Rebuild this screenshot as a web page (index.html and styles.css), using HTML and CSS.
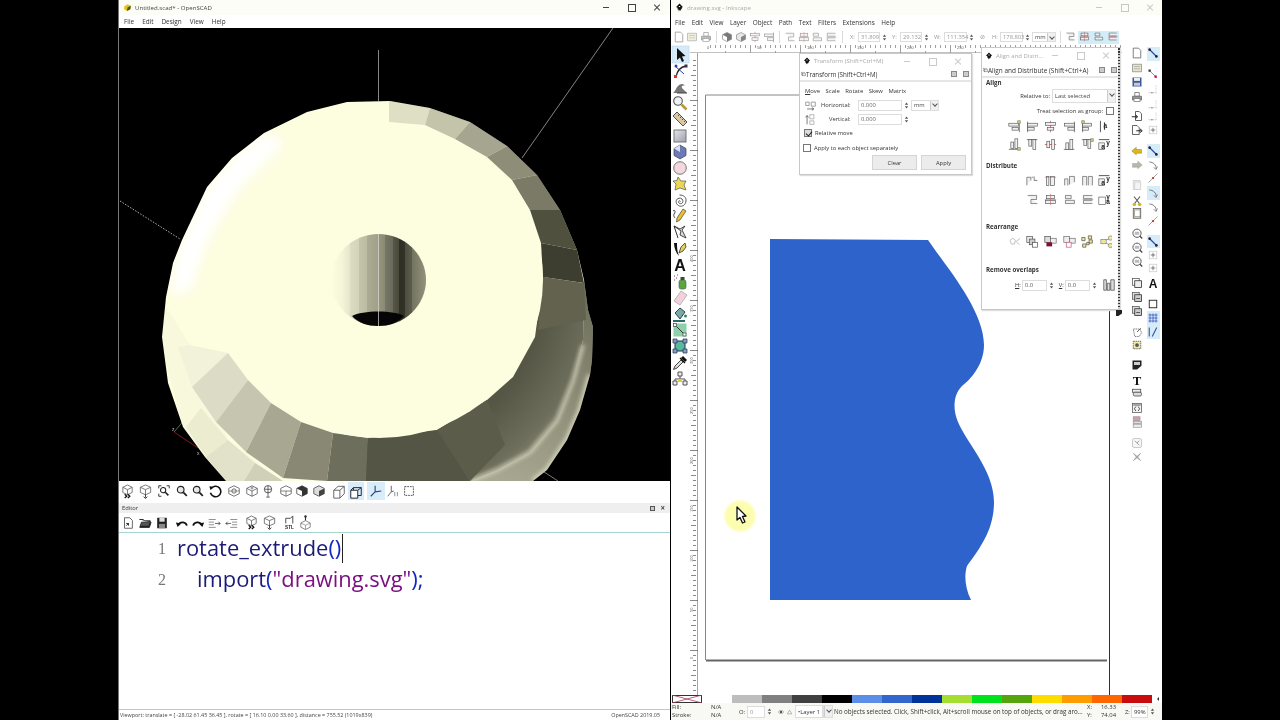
FILE: index.html
```html
<!DOCTYPE html>
<html lang="en">
<head>
<meta charset="utf-8">
<title>OpenSCAD and Inkscape</title>
<link rel="stylesheet" href="styles.css">
</head>
<body>
<svg class="defs" width="0" height="0" aria-hidden="true">
  <defs>
    <radialGradient id="gBand" gradientUnits="userSpaceOnUse" cx="379" cy="280" r="240">
      <stop offset=".7" stop-color="#565646"/><stop offset=".9" stop-color="#6e6e5c"/><stop offset="1" stop-color="#8a8a74"/>
    </radialGradient>
    <linearGradient id="gRing" gradientUnits="userSpaceOnUse" x1="590" y1="300" x2="500" y2="480">
      <stop offset="0" stop-color="#6e6e5c"/><stop offset=".5" stop-color="#8e8e78"/><stop offset="1" stop-color="#a8a892"/>
    </linearGradient>
    <linearGradient id="gHole" gradientUnits="userSpaceOnUse" x1="331" y1="0" x2="426" y2="0">
      <stop offset="0" stop-color="#fdfde0"/><stop offset=".12" stop-color="#f4f4d8"/><stop offset=".2" stop-color="#e6e6cc"/>
      <stop offset=".2" stop-color="#dcdcc2"/><stop offset=".29" stop-color="#d4d4ba"/><stop offset=".29" stop-color="#c4c4aa"/>
      <stop offset=".38" stop-color="#bcbca2"/><stop offset=".38" stop-color="#acac94"/><stop offset=".5" stop-color="#a0a088"/>
      <stop offset=".5" stop-color="#96967e"/><stop offset=".57" stop-color="#8a8a72"/><stop offset=".57" stop-color="#76766a"/>
      <stop offset=".65" stop-color="#6a6a58"/><stop offset=".65" stop-color="#55554a"/><stop offset=".72" stop-color="#4a4a3a"/>
      <stop offset=".72" stop-color="#2e2e26"/><stop offset=".78" stop-color="#333328"/><stop offset=".78" stop-color="#4e4e40"/>
      <stop offset=".85" stop-color="#5c5c4c"/><stop offset=".85" stop-color="#72725f"/><stop offset="1" stop-color="#92927c"/>
    </linearGradient>
    <linearGradient id="gPanel" x1="0" y1="0" x2="1" y2="1"><stop offset="0" stop-color="#e6e6ea"/><stop offset="1" stop-color="#9aa0b0"/></linearGradient>
    <pattern id="tickH" width="50" height="8" patternUnits="userSpaceOnUse">
      <path d="M.5 0V8M5.500 5V8M10.500 5V8M15.500 5V8M20.500 5V8M25.500 3V8M30.500 5V8M35.500 5V8M40.500 5V8M45.500 5V8" stroke="#777" stroke-width=".7" fill="none"/>
    </pattern>
    <pattern id="tickV" width="8" height="50" patternUnits="userSpaceOnUse">
      <path d="M0 .5H8M5 5.500H8M5 10.500H8M5 15.500H8M5 20.500H8M3 25.500H8M5 30.500H8M5 35.500H8M5 40.500H8M5 45.500H8" stroke="#555" stroke-width=".7" fill="none"/>
    </pattern>
    <clipPath id="silh"><polygon points="347,102 390,101 430,108 470,122 507,146 537,175 560,210 577,250 584,280 588,310 593,327 592,360 590,375 580,410 567,440 547,470 533,481 226,481 205,457 183,427 168,383 162,337 166,297 173,263 182,240 207,187 232,158 264,133 307,112"/></clipPath>

    <symbol id="oprev" viewBox="0 0 16 16"><path d="M8 1 13 3.500V9L8 11.500 3 9V3.500ZM3 3.500 8 6 13 3.500M8 6V11.500" fill="none" stroke="#666" stroke-width=".9"/><path d="M5 11l2.200 2-2.200 2M8.300 11l2.200 2-2.200 2" fill="none" stroke="#111" stroke-width="1.300"/></symbol>
    <symbol id="orend" viewBox="0 0 16 16"><path d="M8 1 13.500 3.500V9L8 11.500 2.500 9V3.500ZM2.500 3.500 8 6 13.500 3.500M8 6V11.500" fill="none" stroke="#666" stroke-width=".9"/><path d="M8 11v3.500M6 13.500l2 2 2-2" fill="none" stroke="#333" stroke-width="1"/></symbol>
    <symbol id="zall" viewBox="0 0 16 16"><circle cx="7" cy="7" r="3" fill="#fff" stroke="#222" stroke-width="1.200"/><path d="M9.500 9.500 13 13" stroke="#222" stroke-width="1.800"/><path d="M2 5V2H5M11 2H14V5M2 11V14H5" fill="none" stroke="#222" stroke-width="1"/></symbol>
    <symbol id="zoom" viewBox="0 0 16 16"><circle cx="6.500" cy="6.500" r="3.800" fill="#e8e8e8" stroke="#222" stroke-width="1.300"/><path d="M9.500 9.500 13.500 13.500" stroke="#222" stroke-width="2"/></symbol>
    <symbol id="reset" viewBox="0 0 16 16"><path d="M3.500 5.500A6 6 0 1 1 2.800 10" fill="none" stroke="#111" stroke-width="1.800"/><path d="M1.500 2.500 5.500 3 3 7Z" fill="#111"/></symbol>
    <symbol id="v1" viewBox="0 0 16 16"><path d="M8 2 14 5V11L8 14 2 11V5Z" fill="#fff" stroke="#555" stroke-width=".9"/><circle cx="8" cy="8" r="2.500" fill="#fff" stroke="#333" stroke-width=".8"/><path d="M2 8H14" stroke="#555" stroke-width=".7"/></symbol>
    <symbol id="v2" viewBox="0 0 16 16"><path d="M8 2 14 5V11L8 14 2 11V5ZM2 5 8 8 14 5M8 8V14" fill="#fff" stroke="#555" stroke-width=".9"/><circle cx="8" cy="4.500" r="1.300" fill="#ccc" stroke="#444" stroke-width=".5"/></symbol>
    <symbol id="v3" viewBox="0 0 16 16"><circle cx="8" cy="6" r="4.200" fill="#fff" stroke="#444"/><path d="M4 6H12M8 2V10M8 10V15M6 15H10" stroke="#444" stroke-width=".9"/></symbol>
    <symbol id="v4" viewBox="0 0 16 16"><path d="M8 2 14 5V11L8 14 2 11V5Z" fill="#fff" stroke="#555" stroke-width=".9"/><path d="M2 8H14M8 8V14" stroke="#555" stroke-width=".8"/></symbol>
    <symbol id="v5" viewBox="0 0 16 16"><path d="M8 2 14 5V11L8 14 2 11V5Z" fill="#fff" stroke="#444" stroke-width=".9"/><path d="M8 8 14 5V11L8 14Z M2 5 8 2 14 5 8 8Z" fill="#333"/></symbol>
    <symbol id="v6" viewBox="0 0 16 16"><path d="M8 2 14 5V11L8 14 2 11V5Z" fill="#ddd" stroke="#444" stroke-width=".9"/><path d="M8 8 14 5V11L8 14Z" fill="#444"/></symbol>
    <symbol id="persp" viewBox="0 0 16 16"><path d="M2 6H9V15H2ZM2 6 7 1.500H14V10L9 15M9 6 14 1.500" fill="#fff" stroke="#444" stroke-width=".9"/></symbol>
    <symbol id="ortho" viewBox="0 0 16 16"><path d="M2 6H10V15H2Z" fill="#fff" stroke="#223" stroke-width="1.100"/><path d="M5 3H14V12H10M5 3V6M2 6 5 3M10 6 14 3" fill="none" stroke="#223" stroke-width="1.100"/></symbol>
    <symbol id="axes" viewBox="0 0 16 16"><path d="M7 2V9M7 9 2 14M7 9 14 8" fill="none" stroke="#2a4a7a" stroke-width="1.300"/></symbol>
    <symbol id="scale" viewBox="0 0 16 16"><path d="M6 2V9M6 9 2 14M6 9 9 8" fill="none" stroke="#555" stroke-width="1"/><path d="M10 9V14M13 9V14" stroke="#999" stroke-width="1.200"/></symbol>
    <symbol id="edges" viewBox="0 0 16 16"><rect x="3" y="3" width="10" height="10" fill="none" stroke="#444" stroke-dasharray="2 1" stroke-width="1"/></symbol>
    <symbol id="enew" viewBox="0 0 16 16"><path d="M4 2H10L13 5V14H4Z" fill="#fff" stroke="#555"/><path d="M8.500 8.500 6 11M6 8.500H8.500V11" stroke="#111" fill="none"/></symbol>
    <symbol id="eopen" viewBox="0 0 16 16"><path d="M1.500 4H6L7.500 5.500H14V7H4L2 13H13L15 7" fill="#222" stroke="#222"/><path d="M3 11 4.500 7.500H13L12 11Z" fill="#555"/></symbol>
    <symbol id="esave" viewBox="0 0 16 16"><path d="M2.500 2H13.500V14H2.500Z" fill="#222"/><rect x="5" y="2" width="6" height="4.500" fill="#ddd"/><rect x="4.500" y="9" width="7" height="5" fill="#888"/></symbol>
    <symbol id="undo" viewBox="0 0 16 16"><path d="M4 10A5 4.500 0 0 1 13.500 11" fill="none" stroke="#111" stroke-width="2"/><path d="M1 7.500 7 8.500 3 12.500Z" fill="#111"/></symbol>
    <symbol id="redo" viewBox="0 0 16 16"><path d="M12 10A5 4.500 0 0 0 2.500 11" fill="none" stroke="#111" stroke-width="2"/><path d="M15 7.500 9 8.500 13 12.500Z" fill="#111"/></symbol>
    <symbol id="indent" viewBox="0 0 16 16"><path d="M2 4H10M2 7H8M2 10H8M2 13H10" stroke="#777" stroke-width=".9"/><path d="M9 8.500H15M13 6.500l2 2-2 2" fill="none" stroke="#444" stroke-width=".9"/></symbol>
    <symbol id="unindent" viewBox="0 0 16 16"><path d="M6 4H14M8 7H14M8 10H14M6 13H14" stroke="#777" stroke-width=".9"/><path d="M1 8.500H7M3 6.500l-2 2 2 2" fill="none" stroke="#444" stroke-width=".9"/></symbol>
    <symbol id="stl" viewBox="0 0 16 16"><path d="M4 9V3.500H9L11.500 1V9" fill="none" stroke="#333" stroke-width=".9"/><text x="8" y="15" text-anchor="middle" class="icontxt">STL</text></symbol>
    <symbol id="exp" viewBox="0 0 16 16"><path d="M8 1V6" stroke="#333" stroke-width="1.200"/><circle cx="8" cy="1.500" r="1.300" fill="#333"/><path d="M8 6 13 8.500V13L8 15.500 3 13V8.500Z" fill="none" stroke="#777" stroke-width=".9"/><path d="M3 8.500 8 11 13 8.500M8 11V15.500" fill="none" stroke="#777" stroke-width=".7"/></symbol>
    <symbol id="osicon" viewBox="0 0 16 16"><path d="M2 6 8 2 14 5 13 11 7 14 2 11Z" fill="#e8c020"/><path d="M8 8 14 5 13 11 7 14Z" fill="#3a5a20"/></symbol>
    <symbol id="ink" viewBox="0 0 16 16"><path d="M8 1 14 7 11.500 9 12.500 10.500 10.500 11 10 14 8.500 12 7 15 6 11 4 11.500 5 9 2 7Z" fill="#111"/><path d="M6 5.500H10L8 7.500Z" fill="#fff"/></symbol>
    <symbol id="eye" viewBox="0 0 16 16"><path d="M1 8C4 3 12 3 15 8 12 13 4 13 1 8Z" fill="#fff" stroke="#555" stroke-width="1.400"/><circle cx="8" cy="8" r="2.800" fill="#333"/></symbol>
    <symbol id="lock" viewBox="0 0 16 16"><path d="M8 3 14 13H2Z" fill="none" stroke="#777" stroke-width="1.300"/></symbol>
    <symbol id="hmove" viewBox="0 0 16 16"><path d="M1 3H6V8H1ZM9 3H15V9H9Z" fill="#fff" stroke="#666"/><path d="M3 13H12M10 11 13 13 10 15" fill="none" stroke="#222"/></symbol>
    <symbol id="vmove" viewBox="0 0 16 16"><path d="M7 1H13V7H7ZM7 10H13V15H7Z" fill="#fff" stroke="#888"/><path d="M3 15V3M1 5 3 2 5 5" fill="none" stroke="#222"/></symbol>

    <symbol id="tarrow" viewBox="0 0 16 16"><path d="M5 1V13L8 10.500 10 15 12 14 10 9.500 13.500 9Z" fill="#111"/></symbol>
    <symbol id="tnode" viewBox="0 0 16 16"><path d="M4 14C5 8 8 4 14 3" fill="none" stroke="#222" stroke-width="1.300"/><path d="M3 3 12 11" stroke="#2040b0" stroke-width="1"/><rect x="2" y="12" width="3" height="3" fill="#d33"/><rect x="12.500" y="1.500" width="3" height="3" fill="#334"/><circle cx="4" cy="3" r="1.500" fill="#2040b0"/></symbol>
    <symbol id="ttweak" viewBox="0 0 16 16"><path d="M1 14C3 13 4 9 6 7S11 4 13 7C11 6 9 7 10 9L13 12 15 14Z" fill="#777"/><path d="M5 14H15" stroke="#444"/></symbol>
    <symbol id="tzoom" viewBox="0 0 16 16"><circle cx="6" cy="6" r="4.300" fill="#eef2f5" stroke="#555" stroke-width="1.100"/><path d="M9.500 9.500 14.500 14.500" stroke="#b89838" stroke-width="2.600"/></symbol>
    <symbol id="tmeasure" viewBox="0 0 16 16"><path d="M5 1 15 11 11 15 1 5Z" fill="#d8c8a8" stroke="#444" stroke-width=".9"/><path d="M6 5 7.500 3.500M8 7 9.500 5.500M10 9 11.500 7.500M12 11 13.500 9.500" stroke="#333" stroke-width=".8"/></symbol>
    <symbol id="trect" viewBox="0 0 16 16"><rect x="2" y="2" width="12" height="12" fill="url(#gPanel)" stroke="#777"/></symbol>
    <symbol id="tbox" viewBox="0 0 16 16"><path d="M8 1 14 4.500V11.500L8 15 2 11.500V4.500Z" fill="#6a7ab8" stroke="#444" stroke-width=".7"/><path d="M8 8 2 4.500 8 1V8Z" fill="#dde"/></symbol>
    <symbol id="tellipse" viewBox="0 0 16 16"><circle cx="8" cy="8" r="6.300" fill="#f4d8e0" stroke="#777"/></symbol>
    <symbol id="tstar" viewBox="0 0 16 16"><path d="M6 1 9 5 14 5 12 9 14 14 8 12 3 14 4 8 1 5 5 4.500Z" fill="#ecd850" stroke="#666" stroke-width=".8"/></symbol>
    <symbol id="tspiral" viewBox="0 0 16 16"><path d="M8.500 8.500C8 7 6.500 8 6.500 9S8 11 9.500 10.500 11.500 7.500 10 6 5.500 5 4.500 7 4.500 12 7.500 13 13.500 12 14 8 11.500 2 7.500 2" fill="none" stroke="#555" stroke-width="1"/></symbol>
    <symbol id="tpencil" viewBox="0 0 16 16"><path d="M14 3 11 1 5 10 4.500 14 8 12Z" fill="#e8c030" stroke="#444" stroke-width=".7"/><path d="M1 3C3 1 4 4 2 6 1 8 3 10 3 10" fill="none" stroke="#333" stroke-width=".9"/></symbol>
    <symbol id="tpen" viewBox="0 0 16 16"><path d="M2 2 9 7 8 11 14 14 10 6 13 2 8 5Z" fill="#ddd" stroke="#333" stroke-width=".9"/><path d="M2 2 6 14" stroke="#333" stroke-width="1"/></symbol>
    <symbol id="tcalli" viewBox="0 0 16 16"><path d="M2 2C2 7 4 12 7 15 5 10 5 6 5 2Z" fill="#111"/><path d="M13 2 9 6 7 12 11 10 14 6Z" fill="#e8d050" stroke="#333" stroke-width=".8"/></symbol>
    <symbol id="ttext" viewBox="0 0 16 16"><text x="8" y="14" text-anchor="middle" class="iconA">A</text></symbol>
    <symbol id="tspray" viewBox="0 0 16 16"><rect x="7" y="6" width="7" height="9" rx="2" fill="#58a838" stroke="#456" stroke-width=".6"/><rect x="8.500" y="3" width="4" height="3" fill="#444"/><path d="M2 2h1M4 4h1M2 6h1M5 1h1" stroke="#555"/></symbol>
    <symbol id="teraser" viewBox="0 0 16 16"><path d="M9 1 15 5 8 15 2 11Z" fill="#f4d0dc" stroke="#aaa" stroke-width=".8"/></symbol>
    <symbol id="tbucket" viewBox="0 0 16 16"><path d="M3 7 8 2 13 6 8 13Z" fill="#7aa8a8" stroke="#234" stroke-width=".9"/><path d="M1 15H13" stroke="#2a6a6a" stroke-width="2"/><circle cx="13.500" cy="10" r="1.500" fill="#2a8a5a"/></symbol>
    <symbol id="tgrad" viewBox="0 0 16 16"><rect x="1.500" y="1.500" width="13" height="13" fill="#8ed0a8"/><path d="M3 3 13 13" stroke="#334" stroke-width="1"/><rect x="1.500" y="1.500" width="3" height="3" fill="#fff" stroke="#444" stroke-width=".7"/><rect x="11" y="11" width="3" height="3" fill="#fff" stroke="#444" stroke-width=".7"/></symbol>
    <symbol id="tmesh" viewBox="0 0 16 16"><rect x="3" y="3" width="10" height="10" fill="#58b8a0" stroke="#234"/><path d="M1 1h4v4H1zM11 1h4v4h-4zM1 11h4v4H1zM11 11h4v4h-4z" fill="#89c" stroke="#234" stroke-width=".7"/></symbol>
    <symbol id="tdrop" viewBox="0 0 16 16"><path d="M1.500 14.500 3 11 9 5 11 7 5 13Z" fill="#ddd" stroke="#333" stroke-width=".9"/><path d="M9 3 11 1 15 5 13 7Z" fill="#111"/><path d="M8 3 13 8" stroke="#111" stroke-width="1.400"/></symbol>
    <symbol id="tconn" viewBox="0 0 16 16"><path d="M6 1H10V5H6ZM1 10H5V14H1ZM11 10H15V14H11Z" fill="#eee" stroke="#555"/><path d="M8 5V8M3 10V8H13V10" fill="none" stroke="#555"/><rect x="6" y="8" width="4" height="3" fill="#e8c830"/></symbol>

    <symbol id="cnew" viewBox="0 0 16 16"><path d="M3 1.500H10L13 4.500V14.500H3Z" fill="#fff" stroke="#555"/></symbol>
    <symbol id="copen" viewBox="0 0 16 16"><path d="M2 3H14V13H2Z" fill="#e8e4c8" stroke="#888"/><path d="M4 6H12M4 9H12" stroke="#aaa"/></symbol>
    <symbol id="csave" viewBox="0 0 16 16"><rect x="2" y="2" width="12" height="12" fill="#3a5a9a"/><rect x="4" y="2.500" width="8" height="4" fill="#eee"/><rect x="4" y="9" width="8" height="4" fill="#c8c8d0"/></symbol>
    <symbol id="cprint" viewBox="0 0 16 16"><path d="M5 2H11V7H5Z" fill="#fff" stroke="#666"/><path d="M2 7H14V12H2Z" fill="#999" stroke="#666"/><rect x="4" y="10" width="8" height="4" fill="#fff" stroke="#777"/></symbol>
    <symbol id="cimp" viewBox="0 0 16 16"><path d="M6 2H11L14 5V14H6Z" fill="#fff" stroke="#333"/><path d="M1 9H8M6 6.500 9 9 6 11.500" fill="none" stroke="#111" stroke-width="1.200"/></symbol>
    <symbol id="cexp" viewBox="0 0 16 16"><path d="M2 2H8L11 5V14H2Z" fill="#fff" stroke="#333"/><path d="M7 9H14M12 6.500 15 9 12 11.500" fill="none" stroke="#111" stroke-width="1.200"/></symbol>
    <symbol id="cundo" viewBox="0 0 16 16"><path d="M1 8 7 3V6H14V11H7V13Z" fill="#d8b820" stroke="#8a7a10" stroke-width=".6"/></symbol>
    <symbol id="credo" viewBox="0 0 16 16"><path d="M15 8 9 3V6H2V11H9V13Z" fill="#b8b8a8" stroke="#999" stroke-width=".6"/></symbol>
    <symbol id="ccopy" viewBox="0 0 16 16"><rect x="3" y="2" width="9" height="12" fill="#f0f0f0" stroke="#ccc"/><rect x="5" y="4" width="8" height="10" fill="#f4f4f4" stroke="#ccc"/></symbol>
    <symbol id="ccut" viewBox="0 0 16 16"><path d="M4 2 11 11M12 2 5 11" stroke="#555" stroke-width="1.400"/><circle cx="4.500" cy="12.500" r="2.300" fill="#d8b020"/><circle cx="11.500" cy="12.500" r="2.300" fill="#d8b020"/></symbol>
    <symbol id="cpaste" viewBox="0 0 16 16"><rect x="3" y="2" width="10" height="13" fill="#e8d8a8" stroke="#555"/><rect x="5" y="4" width="7" height="9" fill="#fff" stroke="#777" stroke-width=".7"/></symbol>
    <symbol id="czoomS" viewBox="0 0 16 16"><circle cx="8" cy="7" r="5.500" fill="#fff" stroke="#555" stroke-width="1.300"/><rect x="5" y="5" width="6" height="4" fill="#bbb"/><path d="M12 11 15 14" stroke="#444" stroke-width="1.600"/></symbol>
    <symbol id="cdup" viewBox="0 0 16 16"><rect x="2" y="2" width="9" height="9" fill="#fff" stroke="#555"/><rect x="5" y="5" width="9" height="9" fill="#eee" stroke="#222"/></symbol>
    <symbol id="cclone" viewBox="0 0 16 16"><rect x="2" y="2" width="9" height="9" fill="#ddd" stroke="#555"/><rect x="5" y="5" width="9" height="9" fill="#ccc" stroke="#222"/><path d="M7 10H12" stroke="#333"/></symbol>
    <symbol id="cpic" viewBox="0 0 16 16"><path d="M3 4H12L14 9 11 14H5Z" fill="#fff" stroke="#555" stroke-dasharray="2 1"/><path d="M8 8 13 3" stroke="#333"/></symbol>
    <symbol id="cgrp" viewBox="0 0 16 16"><path d="M3 3H13V13H3Z" fill="#eee8a8" stroke="#444" stroke-dasharray="2 1"/><circle cx="8" cy="8" r="2.500" fill="#555"/></symbol>
    <symbol id="cnote" viewBox="0 0 16 16"><path d="M2 2H14V9L8 14H2Z" fill="#222"/><path d="M4 4H12V8H4Z" fill="#ccc"/></symbol>
    <symbol id="cT" viewBox="0 0 16 16"><text x="8" y="14" text-anchor="middle" class="iconT">T</text></symbol>
    <symbol id="cstack" viewBox="0 0 16 16"><rect x="2" y="3" width="11" height="4" fill="#eee" stroke="#444"/><rect x="3" y="7" width="11" height="5" rx="2" fill="#ddd" stroke="#444"/></symbol>
    <symbol id="cxml" viewBox="0 0 16 16"><rect x="2" y="2" width="12" height="12" fill="#f4f4f4" stroke="#555"/><path d="M6.500 6 4.500 9 6.500 12M9.500 6 11.500 9 9.500 12M3 4H13" fill="none" stroke="#222"/></symbol>
    <symbol id="cstrip" viewBox="0 0 16 16"><rect x="3" y="1" width="9" height="5" fill="#d89aa8" stroke="#999"/><rect x="3" y="7" width="11" height="3" fill="#ddd" stroke="#999"/><rect x="3" y="11" width="11" height="4" fill="#eee" stroke="#999"/></symbol>
    <symbol id="cfaded" viewBox="0 0 16 16"><rect x="2" y="2" width="12" height="12" rx="2" fill="#f6f6f6" stroke="#bbb"/><path d="M5 5 11 11M11 5 8 8" stroke="#888"/></symbol>
    <symbol id="cstar" viewBox="0 0 16 16"><path d="M3 3 8 7 13 3 9 8 13 13 8 9 3 13 7 8Z" fill="#aaa" stroke="#888" stroke-width=".6"/></symbol>

    <symbol id="sn1" viewBox="0 0 16 16"><path d="M3 3 13 13" stroke="#2a4ab0" stroke-width="1.700"/><circle cx="3.500" cy="3.500" r="1.800" fill="#223"/><circle cx="12.500" cy="12.500" r="1.800" fill="#223"/></symbol>
    <symbol id="sn2" viewBox="0 0 16 16"><path d="M3 3 13 13" stroke="#888" stroke-width="1.200"/><rect x="2" y="2" width="3" height="3" fill="#333"/><rect x="10" y="10" width="3" height="3" fill="#b05"/></symbol>
    <symbol id="sn3" viewBox="0 0 16 16"><path d="M3 4C8 4 13 8 12 13" fill="none" stroke="#666" stroke-width="1.100"/><path d="M9 11 12 14 14 10" fill="none" stroke="#666"/></symbol>
    <symbol id="sn4" viewBox="0 0 16 16"><path d="M2 13H14" stroke="#bbb" stroke-dasharray="2 1"/><path d="M12 3V13" stroke="#ccc" stroke-dasharray="2 1"/><path d="M5 13h3" stroke="#777"/></symbol>
    <symbol id="sn5" viewBox="0 0 16 16"><path d="M2 14 14 2" stroke="#888" stroke-width="1"/><circle cx="8" cy="8" r="1.500" fill="#b33"/></symbol>
    <symbol id="sn6" viewBox="0 0 16 16"><rect x="3" y="3" width="10" height="10" fill="#fff" stroke="#ccc"/><path d="M5 8H11M8 5V11" stroke="#556" stroke-width="1"/></symbol>
    <symbol id="snrect" viewBox="0 0 16 16"><rect x="3" y="3" width="10" height="10" fill="#fff" stroke="#222" stroke-width="1.200"/></symbol>
    <symbol id="sngrid" viewBox="0 0 16 16"><path d="M2 4H14M2 8H14M2 12H14M4 2V14M8 2V14M12 2V14" stroke="#3050c0" stroke-width="1"/></symbol>
    <symbol id="snguide" viewBox="0 0 16 16"><path d="M3 2V14M7 14 13 2" stroke="#3050a0" stroke-width="1.400"/></symbol>

    <symbol id="a1" viewBox="0 0 16 16"><rect x="1" y="4" width="12" height="3.500" fill="#f0f0f0" stroke="#555" stroke-width=".8"/><rect x="5" y="9" width="8" height="3.500" fill="#f0f0f0" stroke="#555" stroke-width=".8"/><path d="M14 2V15" stroke="#444" stroke-width=".8"/><rect x="12" y="1" width="3" height="3" fill="#e8d890" stroke="#886"/></symbol>
    <symbol id="a2" viewBox="0 0 16 16"><path d="M2 2V15" stroke="#555" stroke-width=".9"/><rect x="2" y="4" width="12" height="3.500" fill="#f0f0f0" stroke="#555" stroke-width=".8"/><rect x="2" y="9" width="8" height="3.500" fill="#f0f0f0" stroke="#555" stroke-width=".8"/></symbol>
    <symbol id="a3" viewBox="0 0 16 16"><path d="M8 1V15" stroke="#b44" stroke-width=".9"/><rect x="2" y="3" width="12" height="3.500" fill="#f0f0f0" stroke="#555" stroke-width=".8"/><rect x="4" y="9" width="8" height="3.500" fill="#f0f0f0" stroke="#555" stroke-width=".8"/></symbol>
    <symbol id="a4" viewBox="0 0 16 16"><path d="M14 2V15" stroke="#555" stroke-width=".9"/><rect x="2" y="4" width="12" height="3.500" fill="#f0f0f0" stroke="#555" stroke-width=".8"/><rect x="6" y="9" width="8" height="3.500" fill="#f0f0f0" stroke="#555" stroke-width=".8"/></symbol>
    <symbol id="a5" viewBox="0 0 16 16"><path d="M2 1V15" stroke="#555" stroke-width=".9"/><rect x="2" y="4" width="11" height="3.500" fill="#f0f0f0" stroke="#555" stroke-width=".8"/><rect x="2" y="9" width="7" height="3.500" fill="#f0f0f0" stroke="#555" stroke-width=".8"/><rect x="1" y="1" width="3" height="3" fill="#e8d890" stroke="#886"/></symbol>
    <symbol id="a6" viewBox="0 0 16 16"><text x="9" y="10" text-anchor="middle" class="iconya">a</text><path d="M3 1V15" stroke="#333" stroke-width="1"/><path d="M8 12V3" stroke="#333" stroke-width="1.400"/></symbol>
    <symbol id="b1" viewBox="0 0 16 16"><path d="M1 14V4H6V8M7 4H9M10 3V8H14" fill="#f0f0f0" stroke="#555" stroke-width=".8"/></symbol>
    <symbol id="b2" viewBox="0 0 16 16"><rect x="3" y="3" width="3" height="11" fill="#f0f0f0" stroke="#555" stroke-width=".8"/><rect x="8" y="3" width="5" height="11" fill="#f0f0f0" stroke="#555" stroke-width=".8"/><path d="M1 4H15" stroke="#b66" stroke-width=".7"/></symbol>
    <symbol id="b3" viewBox="0 0 16 16"><path d="M2 14V6H6V14M8 13V3H14V10" fill="#f0f0f0" stroke="#555" stroke-width=".8"/></symbol>
    <symbol id="b4" viewBox="0 0 16 16"><path d="M2 14V3H7V14M9 14V3H14V14" fill="#f0f0f0" stroke="#555" stroke-width=".8"/></symbol>
    <symbol id="b5" viewBox="0 0 16 16"><rect x="1" y="6" width="7" height="8" fill="#f4f4f4" stroke="#555" stroke-width=".8"/><text x="10" y="8" class="iconya">y</text><text x="4" y="13" class="iconya">a</text><path d="M1 2H14" stroke="#333"/></symbol>
    <symbol id="c1" viewBox="0 0 16 16"><path d="M2 3H13V8H6V13H14" fill="#f0f0f0" stroke="#555" stroke-width=".8"/></symbol>
    <symbol id="c2" viewBox="0 0 16 16"><rect x="3" y="3" width="10" height="4" fill="#f0f0f0" stroke="#555" stroke-width=".8"/><rect x="2" y="9" width="12" height="4" fill="#f0f0f0" stroke="#555" stroke-width=".8"/><path d="M1 8H15M8 1V15" stroke="#b66" stroke-width=".7"/></symbol>
    <symbol id="c3" viewBox="0 0 16 16"><path d="M3 13V9H14V13ZM3 3H10V7H3Z" fill="#f0f0f0" stroke="#555" stroke-width=".8"/></symbol>
    <symbol id="c4" viewBox="0 0 16 16"><path d="M14 3H3V7H14M14 9H3V13H14" fill="#f0f0f0" stroke="#555" stroke-width=".8"/><path d="M2 8H15" stroke="#b66" stroke-width=".7"/></symbol>
    <symbol id="c5" viewBox="0 0 16 16"><rect x="1" y="5" width="8" height="9" fill="#fff" stroke="#555" stroke-width=".8"/><text x="10" y="7" class="iconya">y</text><text x="10" y="14" class="iconya">a</text></symbol>
    <symbol id="r1" viewBox="0 0 16 16"><path d="M6 4 9 6.500 8 11H4L2.500 6.500ZM10 8 15 4M10 8 14 12" fill="none" stroke="#aaa" stroke-width=".9"/></symbol>
    <symbol id="r2" viewBox="0 0 16 16"><rect x="1" y="2" width="7" height="7" fill="#eee" stroke="#444" stroke-width=".8"/><rect x="4" y="5" width="7" height="7" fill="#ccc" stroke="#444" stroke-width=".8"/><rect x="8" y="9" width="6" height="6" fill="#fff" stroke="#444" stroke-width=".8"/></symbol>
    <symbol id="r3" viewBox="0 0 16 16"><rect x="1" y="2" width="7" height="7" fill="#ddd" stroke="#444" stroke-width=".8"/><rect x="8" y="4" width="7" height="6" fill="#eee" stroke="#666" stroke-width=".8"/><rect x="3" y="9" width="7" height="5" fill="#801030"/></symbol>
    <symbol id="r4" viewBox="0 0 16 16"><rect x="1" y="2" width="7" height="7" fill="#eee" stroke="#666" stroke-width=".8"/><rect x="8" y="4" width="7" height="6" fill="#eee" stroke="#666" stroke-width=".8"/><rect x="4" y="9" width="6" height="6" fill="#fff" stroke="#c06080" stroke-width=".9"/></symbol>
    <symbol id="r5" viewBox="0 0 16 16"><path d="M1 3h4v4H1zM9 1h4v4H9zM10 6h4v4h-4zM2 11h4v4H2zM7 9h3v3H7z" fill="#f0e898" stroke="#444" stroke-width=".8"/></symbol>
    <symbol id="r6" viewBox="0 0 16 16"><path d="M3 7 12 4M3 7 12 12" stroke="#888"/><rect x="1" y="5" width="6" height="5" fill="#f0e898" stroke="#777" stroke-width=".7"/><circle cx="12" cy="3.500" r="2.500" fill="#f0e898" stroke="#777" stroke-width=".7"/><circle cx="12" cy="12" r="2.500" fill="#f0e898" stroke="#777" stroke-width=".7"/></symbol>
    <symbol id="ro" viewBox="0 0 16 16"><path d="M2 2H5V14H2ZM6 6H9V14H6ZM10 2H14V14H10Z" fill="#ddd" stroke="#444" stroke-width=".8"/></symbol>
    <symbol id="spin" viewBox="0 0 6 10"><path d="M1 4 3 1.500 5 4ZM1 6 3 8.500 5 6Z" fill="#555"/></symbol>
  </defs>
</svg>

<main class="desktop">
  <section class="win scad">
    <header class="titlebar">
      <svg class="ticon"><use href="#osicon"/></svg>
      <span class="tname">Untitled.scad* - OpenSCAD</span>
      <span class="wctl"><i class="min"></i><i class="max"></i><i class="cls"></i></span>
    </header>
    <nav class="menu scadmenu"><span>File</span><span>Edit</span><span>Design</span><span>View</span><span>Help</span></nav>
    <div class="viewport">
      <svg class="scene" viewBox="119 28 551 453" aria-label="3D preview">
        <line x1="378.500" y1="50" x2="378.500" y2="101" stroke="#aaa" stroke-width=".8"/>
        <line x1="613" y1="28" x2="522" y2="158" stroke="#bbb" stroke-width=".7"/>
        <line x1="120" y1="201" x2="180" y2="239" stroke="#ddd" stroke-width=".8" stroke-dasharray="1.500 1.500"/>
        <line x1="541" y1="470" x2="558" y2="481" stroke="#999" stroke-width=".8"/>
        <path d="M174 432 198 448" stroke="#a02020" stroke-width=".8"/>
        <path d="M174 432 186 418" stroke="#668866" stroke-width=".8"/>
        <path d="M186 418 188 416" stroke="#6cd86c" stroke-width="2"/>
        <text x="172" y="431" class="axis">z</text><text x="197" y="455" class="axis">x</text>
        <g class="model" clip-path="url(#silh)">
          <rect x="119" y="28" width="551" height="453" fill="#fdfde0"/>
          <polygon points="162,300 190,345 228,440 283,481 226,481 183,427 160,340" fill="#f8f8dc"/>
          <polygon points="584,280 588,310 593,327 592,360 590,375 580,410 567,440 547,470 533,481 440,481 470,475 497,462 530,445 557,415 573,378 583,340" fill="url(#gRing)"/>
          <path class="rim" d="M590 375 580 410 567 440 547 470 533 481" fill="none" stroke="#d4d4bc" stroke-width="5"/>
          <polygon points="186,427 201,408 228,440 206,457" fill="#ecedd0"/>
          <polygon points="206,457 228,440 255,463 244,481 226,481" fill="#e2e2ca"/>
          <polygon points="255,463 283,481 244,481" fill="#d0d0b8"/>
          <polygon points="543,277 584,285 583,340 573,380 557,420 530,452 497,470 470,481 360,481 368,438 437,430 487,400 513,377 535,337" fill="url(#gBand)"/>
          <path class="rim" d="M583 345 573 380 557 420 530 452 497 470 470 481" fill="none" stroke="#dcdcc4" stroke-width="3"/>
          <polygon points="389,101 430,108 425,125 389,122" fill="#dfdfc6"/>
          <polygon points="430,108 470,122 455,139 425,125" fill="#c4c4aa"/>
          <polygon points="470,122 507,146 487,157 455,139" fill="#a6a690"/>
          <polygon points="507,146 537,175 512,180 487,157" fill="#8e8e78"/>
          <polygon points="537,175 560,210 530,210 512,180" fill="#7a7a66"/>
          <polygon points="560,210 577,250 541,243 530,210" fill="#50503f"/>
          <polygon points="577,250 584,283 543,277 541,243" fill="#3e3e30"/>
          <polygon points="543,277 584,283 586,320 538,330" fill="#62624f"/>
          <polygon points="190,345 228,353 192,387 178,347" fill="#f2f2da"/>
          <polygon points="228,353 248,380 216,422 192,387" fill="#dcdcc6"/>
          <polygon points="248,380 271,403 246,452 216,422" fill="#c6c6b0"/>
          <polygon points="271,403 301,422 283,478 246,452" fill="#a8a892"/>
          <polygon points="301,422 333,433 327,481 283,478" fill="#888874"/>
          <polygon points="333,433 368,438 366,481 327,481" fill="#6e6e5c"/>
          <polygon points="368,438 402,438 437,430 470,481 366,481" fill="#555545"/>
          <polygon points="437,430 487,400 505,445 470,481" fill="#5c5c4a"/>
          <ellipse cx="379" cy="280" rx="164" ry="158" fill="#fdfde0"/>
          <path class="soft" d="M232 158 207 187 182 240 168 292 190 292 208 240 238 190 285 142 264 133Z" fill="#fff"/>
          <ellipse cx="378.500" cy="280" rx="47.500" ry="46" fill="url(#gHole)"/>
          <path d="M352 316C362 310 395 310 404 316 398 323 388 326 378 326S358 323 352 316Z" fill="#050505"/>
          <line x1="378.500" y1="234" x2="378.500" y2="326" stroke="#ddd" stroke-width=".7"/>
        </g>
      </svg>
    </div>
    <div class="bar mainbar">
      <svg class="strip" viewBox="118 481 552 22" aria-label="View toolbar">
        <rect x="348" y="482" width="16" height="18" fill="#d8ecfa"/><rect x="367" y="482" width="18" height="18" fill="#d8ecfa"/>
        <use href="#oprev" x="120" y="484" width="15" height="15"/><use href="#orend" x="138" y="484" width="15" height="15"/>
        <use href="#zall" x="157" y="484" width="14" height="14"/><use href="#zoom" x="175" y="484" width="14" height="14"/><use href="#zoom" x="191" y="484" width="14" height="14"/><use href="#reset" x="208" y="484" width="14" height="14"/>
        <use href="#v1" x="227" y="484" width="14" height="14"/><use href="#v2" x="245" y="484" width="14" height="14"/><use href="#v3" x="261" y="484" width="14" height="14"/><use href="#v4" x="279" y="484" width="14" height="14"/><use href="#v5" x="295" y="484" width="14" height="14"/><use href="#v6" x="312" y="484" width="14" height="14"/>
        <use href="#persp" x="332" y="485" width="14" height="14"/><use href="#ortho" x="349" y="485" width="14" height="14"/><use href="#axes" x="369" y="484" width="14" height="14"/><use href="#scale" x="386" y="484" width="14" height="14"/><use href="#edges" x="402" y="484" width="14" height="14"/>
      </svg>
    </div>
    <div class="edhead"><span>Editor</span><span class="edbtns"><i class="float"></i><i class="edx">×</i></span></div>
    <div class="bar edbar">
      <svg class="strip" viewBox="118 513 552 19" aria-label="Editor toolbar">
        <use href="#enew" x="121" y="516" width="14" height="14"/><use href="#eopen" x="138" y="516" width="14" height="14"/><use href="#esave" x="155" y="516" width="14" height="14"/>
        <use href="#undo" x="175" y="516" width="14" height="14"/><use href="#redo" x="191" y="516" width="14" height="14"/><use href="#indent" x="207" y="516" width="14" height="14"/><use href="#unindent" x="225" y="516" width="14" height="14"/>
        <use href="#oprev" x="244" y="515" width="15" height="15"/><use href="#orend" x="262" y="515" width="15" height="15"/><use href="#stl" x="282" y="515" width="15" height="15"/><use href="#exp" x="298" y="515" width="15" height="15"/>
      </svg>
    </div>
    <div class="editor">
      <div class="gutter"><span>1</span><span>2</span></div>
      <pre class="code"><span class="line"><span class="fn">rotate_extrude</span><span class="par">()</span><i class="caret"></i></span><span class="line in"><span class="fn">import</span><span class="par">(</span><span class="str">"drawing.svg"</span><span class="par">);</span></span></pre>
    </div>
    <footer class="status"><span>Viewport: translate = [ -28.02 61.45 36.45 ], rotate = [ 16.10 0.00 33.60 ], distance = 755.52 (1019x839)</span><span>OpenSCAD 2019.05</span></footer>
  </section>

  <section class="win ink">
    <header class="titlebar inktitle">
      <svg class="ticon"><use href="#ink"/></svg>
      <span class="tname">drawing.svg - Inkscape</span>
      <span class="wctl faded"><i class="min"></i><i class="max"></i><i class="cls"></i></span>
    </header>
    <nav class="menu inkmenu"><span>File</span><span>Edit</span><span>View</span><span>Layer</span><span>Object</span><span>Path</span><span>Text</span><span>Filters</span><span>Extensions</span><span>Help</span></nav>
    <div class="inkbar">
      <svg class="ibar1" viewBox="671 29 176 16" aria-label="Select toolbar">
        <g class="dim">
        <use href="#cnew" x="673" y="31" width="12" height="12"/><use href="#copen" x="686" y="31" width="12" height="12"/><use href="#cprint" x="700" y="31" width="12" height="12"/>
        <use href="#v5" x="721" y="31" width="12" height="12"/><use href="#v6" x="735" y="31" width="12" height="12"/><use href="#a3" x="749" y="31" width="12" height="12"/><use href="#a4" x="763" y="31" width="12" height="12"/>
        <use href="#c1" x="784" y="31" width="12" height="12"/><use href="#c2" x="798" y="31" width="12" height="12"/><use href="#c3" x="811" y="31" width="12" height="12"/><use href="#c4" x="825" y="31" width="12" height="12"/>
        </g>
        <path d="M716.500 31V43M779.500 31V43M842.500 31V43" stroke="#ccc" stroke-width=".7"/>
      </svg>
      <span class="lbl x">X:</span><span class="fld w21">31.809</span><svg class="spn"><use href="#spin"/></svg>
      <span class="lbl y">Y:</span><span class="fld w21">29.132</span><svg class="spn"><use href="#spin"/></svg>
      <span class="lbl w">W:</span><span class="fld w23">111.354</span><svg class="spn"><use href="#spin"/></svg>
      <span class="lbl lock">⊘</span>
      <span class="lbl h">H:</span><span class="fld w23">178.803</span><svg class="spn"><use href="#spin"/></svg>
      <span class="fld unit">mm<b class="cvr"></b></span>
      <svg class="ibar2" viewBox="1058 29 62 16" aria-label="Scale options">
        <rect x="1076" y="31" width="41" height="13" fill="#d2ecf8"/>
        <path d="M1058.500 31V43" stroke="#ccc" stroke-width=".7"/>
        <use href="#c1" x="1063" y="31" width="11" height="11"/><use href="#c2" x="1077" y="31" width="11" height="11"/><use href="#c3" x="1091" y="31" width="11" height="11"/><use href="#c4" x="1105" y="31" width="11" height="11"/>
      </svg>
    </div>

    <div class="inkbody">
      <svg class="tools" viewBox="671 45 19 650" aria-label="Tools">
        <rect x="672" y="46" width="17" height="17" fill="#d6eaf8" stroke="#bcd8ec" stroke-width=".6"/>
        <use href="#tarrow" x="672" y="47" width="16" height="16"/><use href="#tnode" x="672" y="63" width="16" height="16"/><use href="#ttweak" x="672" y="79" width="16" height="16"/><use href="#tzoom" x="672" y="95" width="16" height="16"/><use href="#tmeasure" x="672" y="111" width="16" height="16"/><use href="#trect" x="672" y="128" width="16" height="16"/><use href="#tbox" x="672" y="144" width="16" height="16"/><use href="#tellipse" x="672" y="160" width="16" height="16"/><use href="#tstar" x="672" y="176" width="16" height="16"/><use href="#tspiral" x="672" y="193" width="16" height="16"/><use href="#tpencil" x="672" y="208" width="16" height="16"/><use href="#tpen" x="672" y="224" width="16" height="16"/><use href="#tcalli" x="672" y="241" width="16" height="16"/><use href="#ttext" x="672" y="257" width="16" height="16"/><use href="#tspray" x="672" y="274" width="16" height="16"/><use href="#teraser" x="672" y="290" width="16" height="16"/><use href="#tbucket" x="672" y="306" width="16" height="16"/><use href="#tgrad" x="672" y="322" width="16" height="16"/><use href="#tmesh" x="672" y="338" width="16" height="16"/><use href="#tdrop" x="672" y="355" width="16" height="16"/><use href="#tconn" x="672" y="371" width="16" height="16"/>
      </svg>
      <div class="workarea">
        <svg class="hruler" viewBox="690 45 432 8" aria-label="Horizontal ruler">
          <rect x="706" y="45" width="420" height="8" fill="url(#tickH)"/>
          <path d="M690 52.500H1122" stroke="#999" stroke-width=".6"/>
          <g class="rtxt"><text x="707" y="49">0</text><text x="757" y="49">50</text><text x="807" y="49">100</text><text x="857" y="49">150</text><text x="907" y="49">200</text><text x="957" y="49">250</text></g>
        </svg>
        <div class="canvrow">
          <svg class="vruler" viewBox="690 53 8 642" aria-label="Vertical ruler">
            <rect x="690" y="60" width="8" height="640" fill="url(#tickV)"/>
            <path d="M697.500 53V695" stroke="#666" stroke-width=".6"/>
            <g class="rtxt"><text transform="translate(693 659) rotate(-90)">0</text><text transform="translate(693 612) rotate(-90)">50</text><text transform="translate(693 562) rotate(-90)">100</text><text transform="translate(693 512) rotate(-90)">150</text><text transform="translate(693 464) rotate(-90)">200</text><text transform="translate(693 414) rotate(-90)">250</text><text transform="translate(693 364) rotate(-90)">300</text><text transform="translate(693 312) rotate(-90)">350</text><text transform="translate(693 262) rotate(-90)">400</text></g>
          </svg>
          <svg class="canvas" viewBox="698 53 424 642" aria-label="Drawing">
            <path d="M705.500 95H800M705.500 95V660" fill="none" stroke="#888" stroke-width="1"/>
            <path d="M706 660.500H1107" stroke="#666" stroke-width="1.800"/>
            <path d="M1109.500 300V695" stroke="#333" stroke-width="1"/>
            <path d="M770 239 928 240C945 265 984 310 984 345 984 365 970 380 962 386 954 394 952 408 958 422 966 442 994 470 994 502 994 530 980 548 967 566 964 575 965 588 971 600H770Z" fill="#2e63cc"/>
            <circle cx="740" cy="516" r="15.500" class="halo"/>
            <path d="M737 507V520L740 517.500 742.500 523 745 522 742.500 516.500 746 516Z" fill="#fff" stroke="#111" stroke-width="1.300" stroke-linejoin="round"/>
          </svg>
        </div>
      </div>
      <svg class="cmds" viewBox="1122 45 40 650" aria-label="Commands and snapping">
        <g class="hl"><rect x="1147" y="47" width="13" height="14"/><rect x="1147" y="144" width="13" height="14"/><rect x="1147" y="186" width="13" height="14"/><rect x="1147" y="235" width="13" height="13"/><rect x="1147" y="311" width="13" height="14"/><rect x="1147" y="325" width="13" height="14"/></g>
        <use href="#cnew" x="1131" y="47" width="12" height="12"/><use href="#copen" x="1131" y="62" width="12" height="12"/><use href="#csave" x="1131" y="76" width="12" height="12"/><use href="#cprint" x="1131" y="91" width="12" height="12"/><use href="#cimp" x="1131" y="110" width="12" height="12"/><use href="#cexp" x="1131" y="124" width="12" height="12"/><use href="#cundo" x="1131" y="145" width="12" height="12"/><use href="#credo" x="1131" y="159" width="12" height="12"/><use href="#ccopy" x="1131" y="179" width="12" height="12"/><use href="#ccut" x="1131" y="195" width="12" height="12"/><use href="#cpaste" x="1131" y="207" width="12" height="12"/><use href="#czoomS" x="1131" y="228" width="12" height="12"/><use href="#czoomS" x="1131" y="242" width="12" height="12"/><use href="#czoomS" x="1131" y="256" width="12" height="12"/><use href="#cdup" x="1131" y="277" width="12" height="12"/><use href="#cclone" x="1131" y="291" width="12" height="12"/><use href="#cclone" x="1131" y="305" width="12" height="12"/><use href="#cpic" x="1131" y="326" width="12" height="12"/><use href="#cgrp" x="1131" y="339" width="12" height="12"/><use href="#cnote" x="1131" y="359" width="12" height="12"/><use href="#cT" x="1131" y="374" width="12" height="12"/><use href="#cstack" x="1131" y="387" width="12" height="12"/><use href="#cxml" x="1131" y="402" width="12" height="12"/><use href="#cstrip" x="1131" y="416" width="12" height="12"/><use href="#cfaded" x="1131" y="437" width="12" height="12"/><use href="#cstar" x="1131" y="451" width="12" height="12"/>
        <use href="#sn1" x="1147" y="47" width="12" height="12"/><use href="#sn2" x="1147" y="68" width="12" height="12"/><use href="#sn4" x="1147" y="83" width="12" height="12"/><use href="#sn4" x="1147" y="98" width="12" height="12"/><use href="#sn4" x="1147" y="110" width="12" height="12"/><use href="#sn6" x="1147" y="124" width="12" height="12"/><use href="#sn1" x="1147" y="145" width="12" height="12"/><use href="#sn3" x="1147" y="159" width="12" height="12"/><use href="#sn5" x="1147" y="172" width="12" height="12"/><use href="#sn3" x="1147" y="187" width="12" height="12"/><use href="#sn3" x="1147" y="201" width="12" height="12"/><use href="#sn5" x="1147" y="215" width="12" height="12"/><use href="#sn1" x="1147" y="236" width="12" height="12"/><use href="#sn6" x="1147" y="249" width="12" height="12"/><use href="#sn6" x="1147" y="262" width="12" height="12"/><use href="#ttext" x="1147" y="277" width="12" height="12"/><use href="#snrect" x="1147" y="298" width="12" height="12"/><use href="#sngrid" x="1147" y="312" width="12" height="12"/><use href="#snguide" x="1147" y="326" width="12" height="12"/>
      </svg>
    </div>

    <div class="palette"><svg class="none" viewBox="0 0 30 8" preserveAspectRatio="none"><rect x=".5" y=".5" width="29" height="7" fill="#fff" stroke="#333"/><path d="M0 0 30 8M0 8 30 0" stroke="#a83858" stroke-width=".8"/></svg><i class="c01"></i><i class="c02"></i><i class="c03"></i><i class="c04"></i><i class="c05"></i><i class="c06"></i><i class="c07"></i><i class="c08"></i><i class="c09"></i><i class="c10"></i><i class="c11"></i><i class="c12"></i><i class="c13"></i><i class="c14"></i><i class="c15"></i><b class="more"></b></div>

    <footer class="inkstatus">
      <div class="fs"><span>Fill:</span><span>N/A</span><span>Stroke:</span><span>N/A</span></div>
      <span class="olbl">O:</span><span class="fld obox">0</span><svg class="spn"><use href="#spin"/></svg>
      <svg class="eye"><use href="#eye"/></svg><svg class="lk"><use href="#lock"/></svg>
      <span class="fld layer">•Layer 1</span><span class="fld layerdd"><b class="cvr"></b></span>
      <span class="msg">No objects selected. Click, Shift+click, Alt+scroll mouse on top of objects, or drag aro...</span>
      <div class="xy"><span>X:</span><span>16.33</span><span>Y:</span><span>74.04</span></div>
      <span class="zlbl">Z:</span><span class="fld zbox">99%</span><svg class="spn"><use href="#spin"/></svg>
    </footer>

    <aside class="dialog transform">
      <div class="dtitle"><svg class="ticon sm"><use href="#ink"/></svg><span>Transform (Shift+Ctrl+M)</span><span class="wctl faded"><i class="min"></i><i class="max"></i><i class="cls"></i></span></div>
      <div class="dhead"><svg class="hico"><use href="#cdup"/></svg><span class="hname">Transform (Shift+Ctrl+M)</span><span class="dbtns"><i></i><i></i></span></div>
      <div class="tabs"><u>M</u>ove<span class="sp"></span>Scale<span class="sp"></span>Rotate<span class="sp"></span>Skew<span class="sp"></span>Matrix</div>
      <div class="frow hz"><svg class="ficon"><use href="#hmove"/></svg><label class="lh">Horizontal:</label><span class="fld inp">0.000</span><svg class="spn"><use href="#spin"/></svg><span class="fld unit2">mm<b class="cvr"></b></span></div>
      <div class="frow vt"><svg class="ficon"><use href="#vmove"/></svg><label class="lv">Vertical:</label><span class="fld inp">0.000</span><svg class="spn"><use href="#spin"/></svg></div>
      <div class="frow chk first"><i class="box on"></i><span>Relative move</span></div>
      <div class="frow chk second"><i class="box"></i><span>Apply to each object separately</span></div>
      <div class="btns"><span class="btn">Clear</span><span class="btn">Apply</span></div>
    </aside>

    <aside class="dialog align">
      <div class="dtitle tall"><svg class="ticon sm"><use href="#ink"/></svg><span>Align and Distri...</span><span class="wctl faded"><i class="min"></i><i class="max"></i><i class="cls"></i></span></div>
      <div class="dhead"><svg class="hico"><use href="#cdup"/></svg><span class="hname">Align and Distribute (Shift+Ctrl+A)</span><span class="dbtns"><i></i><i></i></span></div>
      <h4 class="sect s1">Align</h4>
      <div class="frow rel"><span>Relative to:</span><span class="fld sel">Last selected<b class="cvr"></b></span></div>
      <div class="frow treat"><span>Treat selection as group:</span><i class="box"></i></div>
      <svg class="grid g1" viewBox="0 0 132 36" aria-label="Align">
        <use href="#a1" x="28" y="0" width="13" height="13"/><use href="#a2" x="46" y="0" width="13" height="13"/><use href="#a3" x="64" y="0" width="13" height="13"/><use href="#a4" x="83" y="0" width="13" height="13"/><use href="#a5" x="101" y="0" width="13" height="13"/><use href="#a6" x="118" y="0" width="13" height="13"/>
        <use href="#a1" transform="rotate(90 34.500 24.500)" x="28" y="18" width="13" height="13"/><use href="#a2" transform="rotate(90 52.500 24.500)" x="46" y="18" width="13" height="13"/><use href="#a3" transform="rotate(90 70.500 24.500)" x="64" y="18" width="13" height="13"/><use href="#a4" transform="rotate(90 89.500 24.500)" x="83" y="18" width="13" height="13"/><use href="#a5" transform="rotate(90 107.500 24.500)" x="101" y="18" width="13" height="13"/><use href="#b5" x="118" y="18" width="13" height="13"/>
      </svg>
      <h4 class="sect s2">Distribute</h4>
      <svg class="grid g2" viewBox="0 0 132 34" aria-label="Distribute">
        <use href="#b1" x="46" y="0" width="13" height="13"/><use href="#b2" x="64" y="0" width="13" height="13"/><use href="#b3" x="83" y="0" width="13" height="13"/><use href="#b4" x="101" y="0" width="13" height="13"/><use href="#b5" x="118" y="0" width="13" height="13"/>
        <use href="#c1" x="46" y="19" width="13" height="13"/><use href="#c2" x="64" y="19" width="13" height="13"/><use href="#c3" x="83" y="19" width="13" height="13"/><use href="#c4" x="101" y="19" width="13" height="13"/><use href="#c5" x="118" y="19" width="13" height="13"/>
      </svg>
      <h4 class="sect s3">Rearrange</h4>
      <svg class="grid g3" viewBox="0 0 132 14" aria-label="Rearrange">
        <use href="#r1" x="28" y="0" width="13" height="13"/><use href="#r2" x="46" y="0" width="13" height="13"/><use href="#r3" x="64" y="0" width="13" height="13"/><use href="#r4" x="83" y="0" width="13" height="13"/><use href="#r5" x="101" y="0" width="13" height="13"/><use href="#r6" x="120" y="0" width="14" height="14"/>
      </svg>
      <h4 class="sect s4">Remove overlaps</h4>
      <div class="frow over"><u>H</u>:<span class="fld ov">0.0</span><svg class="spn"><use href="#spin"/></svg><u class="vv">V</u>:<span class="fld ov">0.0</span><svg class="spn"><use href="#spin"/></svg><svg class="roic"><use href="#ro"/></svg></div>
      <i class="edge"></i>
      <i class="grip"></i>
    </aside>
  </section>
</main>
</body>
</html>
```

FILE: styles.css
```css
* { box-sizing: border-box; }
html, body { margin: 0; height: 100%; background: #000; overflow: hidden; }
body { font-family: "Open Sans", "Liberation Sans", sans-serif; font-size: 6.2px; color: #333; }
.defs { position: absolute; }
i { font-style: normal; display: block; }
.desktop { width: 1280px; height: 720px; display: flex; padding-left: 118px; gap: 1px; }
.win { position: relative; height: 720px; background: #fff; display: flex; flex-direction: column; overflow: hidden; filter: blur(.25px); }
.scad { width: 552px; border-left: 1px solid #777; }
.ink { width: 491px; }

.titlebar { height: 15px; display: flex; align-items: center; padding-left: 4px; background: #fdfdf8; font-size: 6.100px; flex: none; position: relative; }
.ticon { width: 9px; height: 9px; margin-right: 3px; flex: none; }
.tname { color: #444; }
.inktitle .tname { color: #aaa; }
.wctl { position: absolute; right: 0; top: 0; height: 15px; display: flex; align-items: center; }
.wctl i { width: 25px; height: 9px; position: relative; }
.min::after { content: ""; position: absolute; left: 9px; top: 4px; width: 6px; height: 1px; background: #444; }
.max::after { content: ""; position: absolute; left: 9px; top: 1px; width: 6px; height: 6px; border: 1px solid #444; }
.cls::before, .cls::after { content: ""; position: absolute; left: 8.500px; top: 4px; width: 8px; height: 1px; background: #444; transform: rotate(45deg); }
.cls::after { transform: rotate(-45deg); }
.faded { opacity: .28; }
.scad .wctl { padding-right: 1px; }

.menu { height: 13px; display: flex; align-items: center; flex: none; font-size: 6.400px; color: #333; }
.scadmenu { padding-left: 5px; gap: 8px; }
.inkmenu { height: 14px; padding-left: 4px; gap: 6.500px; }

.viewport { height: 453px; background: #000; flex: none; }
.scene { display: block; width: 551px; height: 453px; }
.model { filter: blur(.45px); }
.soft { filter: blur(6px); }
.rim { filter: blur(2px); }
.axis { font-size: 5px; fill: #bbb; font-family: "Liberation Sans", sans-serif; }

.bar { background: #fff; flex: none; }
.mainbar { height: 22px; }
.strip { display: block; width: 552px; height: 100%; margin-left: -1px; }
.edbar { height: 19px; }
.edhead { height: 10px; background: #efefef; display: flex; align-items: center; justify-content: space-between; padding: 0 5px 0 3px; font-size: 5.800px; flex: none; }
.edbtns { display: flex; gap: 5px; align-items: center; }
.float { width: 5px; height: 5px; border: 1px solid #555; background: #ccc; }
.edx { font-size: 8px; line-height: 6px; font-weight: 700; color: #444; }
.icontxt { font: 700 5px "Liberation Sans", sans-serif; fill: #222; }
.iconA { font: 700 16px "Liberation Sans", sans-serif; fill: #111; }
.iconT { font: 700 17px "Liberation Serif", serif; fill: #111; }
.iconya { font: 700 8px "Liberation Sans", sans-serif; fill: #222; }

.editor { height: 177px; border-top: 1px solid #a6d4d4; display: flex; flex: none; background: #fff; }
.gutter { width: 47px; display: flex; flex-direction: column; align-items: flex-end; font: 16px/31px "Liberation Serif", serif; color: #777; flex: none; }
.gutter span { height: 31px; }
.code { margin: -1px 0 0 11px; font: 21.900px/31px "Open Sans", sans-serif; color: #1c1c78; }
.line { display: flex; height: 31px; position: relative; white-space: pre; }
.in { padding-left: 20px; }
.fn { color: #1c1c78; }
.par { color: #1028c0; }
.str { color: #7c1080; }
.caret { width: 1px; height: 29px; margin: 2px 0 0 .5px; background: #222; }

.status { height: 11px; border-top: 1px solid #a6d4d4; display: flex; justify-content: space-between; align-items: center; padding: 0 10px 0 1px; font-size: 5.400px; color: #444; flex: 1; }

.inkbar { height: 16px; flex: none; display: flex; align-items: center; color: #999; font-size: 5.800px; }
.ibar1 { width: 176px; height: 16px; flex: none; }
.dim { opacity: .65; }
.ibar2 { width: 62px; height: 16px; flex: none; margin-left: 4px; }
.fld { border: 1px solid #ddd; background: #fff; display: flex; align-items: center; padding-left: 2px; height: 10px; position: relative; color: #999; flex: none; }
.spn { width: 5px; height: 9px; margin-left: 2px; flex: none; }
.lbl { flex: none; }
.x { margin-left: 3px; width: 8px; }
.y { margin-left: 5px; width: 8px; }
.w { margin-left: 5px; width: 10px; }
.lock { margin-left: 6px; width: 9px; }
.h { margin-left: 3px; width: 8px; }
.w21 { width: 22px; }
.w23 { width: 23px; }
.unit { width: 24px; margin-left: 2px; color: #444; }
.cvr { position: absolute; right: 0; top: 0; bottom: 0; width: 8px; background: #f0f0f0; border-left: 1px solid #ccc; }
.cvr::after { content: ""; position: absolute; left: 2px; top: 1.500px; width: 3px; height: 3px; border-right: 1px solid #555; border-bottom: 1px solid #555; transform: rotate(45deg); }

.inkbody { height: 650px; display: flex; flex: none; }
.tools { width: 19px; height: 650px; flex: none; }
.workarea { width: 432px; flex: none; display: flex; flex-direction: column; }
.hruler { display: block; width: 432px; height: 8px; flex: none; }
.canvrow { display: flex; height: 642px; }
.vruler { width: 8px; height: 642px; flex: none; }
.canvas { width: 424px; height: 642px; flex: none; }
.rtxt { font: 4px "Liberation Sans", sans-serif; fill: #666; }
.cmds { width: 40px; height: 650px; flex: none; }
.hl rect { fill: #d6ecf8; }
.halo { fill: #fdfdb0; filter: blur(1px); }

.palette { height: 8px; display: flex; flex: none; padding-left: 1px; }
.palette i { width: 30px; height: 8px; }
.palette .none { width: 30px; height: 8px; flex: none; }
.c01 { background: #fff; } .c02 { background: #bdbdbd; } .c03 { background: #808080; } .c04 { background: #404040; } .c05 { background: #000; }
.c06 { background: #5c8ee8; } .c07 { background: #3366cc; } .c08 { background: #003399; } .c09 { background: #a4de30; } .c10 { background: #00e21c; }
.c11 { background: #55a40c; } .c12 { background: #ffdc00; } .c13 { background: #ff9c00; } .c14 { background: #ff6600; } .c15 { background: #c80c10; }
.more { width: 0; height: 0; margin: 2px 0 0 3px; border: 2px solid transparent; border-right-color: #333; }

.inkstatus { height: 17px; flex: none; background: #f8f8f4; display: flex; align-items: center; color: #333; font-size: 5.900px; }
.fs { width: 62px; display: grid; grid-template-columns: 39px 1fr; line-height: 7.500px; padding-left: 1px; flex: none; }
.olbl { margin-left: 6px; width: 8px; flex: none; }
.obox { width: 18px; height: 12px; }
.eye { margin-left: 4px; width: 10px; height: 6px; flex: none; }
.lk { width: 7px; height: 6px; flex: none; }
.layer { width: 28px; height: 13px; margin-left: 2px; color: #333; }
.layerdd { width: 10px; height: 13px; padding: 0; }
.msg { margin-left: 1px; width: 253px; flex: none; white-space: nowrap; color: #333; overflow: hidden; font-size: 6.250px; }
.xy { width: 36px; display: grid; grid-template-columns: 14px 1fr; line-height: 7.500px; flex: none; }
.zlbl { width: 6px; margin-left: 2px; flex: none; }
.zbox { width: 17px; height: 12px; color: #333; }

.dialog { position: absolute; background: #fff; border: 1px solid #c8c8c8; color: #333; font-size: 5.800px; box-shadow: 1px 1px 1px #ddd; }
.transform { left: 128px; top: 53px; width: 173px; height: 122px; }
.align { left: 310px; top: 47px; width: 139px; height: 263px; }
.dtitle { height: 14px; display: flex; align-items: center; padding-left: 3px; color: #aaa; font-size: 6px; position: relative; flex: none; }
.tall { height: 16px; }
.ticon.sm { width: 8px; height: 8px; }
.dtitle .wctl { height: 14px; right: 1px; }
.dhead { height: 14px; display: flex; align-items: center; padding: 0 2px 0 1px; background: #fff; border-bottom: 2px solid #e6e6e6; font-size: 6.200px; }
.hico { width: 5px; height: 6px; flex: none; }
.hname { flex: 1; }
.align .hname { font-size: 6.450px; }
.dbtns { display: flex; gap: 6px; }
.dbtns i { width: 6px; height: 6px; background: #ccc; border: 1px solid #888; }
.tabs { padding: 4px 0 0 5px; height: 14px; font-size: 5.900px; display: flex; align-items: center; white-space: pre; }
.sp { width: 5.500px; }
.frow { display: flex; align-items: center; height: 14px; }
.ficon { width: 11px; height: 11px; flex: none; opacity: .85; }
.hz { padding-left: 5px; margin-top: 2px; }
.vt { padding-left: 5px; }
.lh { margin-left: 5px; width: 37px; }
.lv { margin-left: 13px; width: 29px; }
.inp { width: 44px; height: 11px; color: #666; }
.unit2 { width: 28px; margin-left: 2px; height: 11px; color: #444; }
.box { width: 8px; height: 8px; border: 1px solid #777; background: #fff; flex: none; position: relative; }
.box.on { background: #ddd; }
.box.on::after { content: ""; position: absolute; left: 1.500px; top: 0; width: 3px; height: 5px; border-right: 1px solid #222; border-bottom: 1px solid #222; transform: rotate(40deg); }
.chk { gap: 3px; }
.first { padding-left: 4px; height: 14px; }
.second { padding-left: 3px; height: 15px; }
.btns { display: flex; justify-content: flex-end; gap: 4px; padding: 0 5px 0 0; }
.btn { width: 45px; height: 15px; background: #ececec; border: 1px solid #d4d4d4; display: flex; align-items: center; justify-content: center; }

.sect { margin: 0; padding-left: 4px; font-size: 6.200px; font-weight: 700; color: #333; height: 10px; line-height: 10px; }
.s1 { margin-top: 0; }
.rel { justify-content: flex-end; padding-right: 3px; gap: 2px; height: 14px; margin-top: 1px; }
.sel { width: 64px; height: 14px; color: #444; }
.treat { justify-content: flex-end; padding-right: 5px; gap: 3px; height: 15px; }
.grid { display: block; width: 132px; }
.g1 { height: 36px; margin: 2px 0 0 -2px; }
.s2 { margin-top: 5px; }
.g2 { height: 34px; margin: 3px 0 0 -2px; }
.s3 { margin-top: 14px; }
.g3 { height: 14px; margin: 3px 0 0 -2px; }
.s4 { margin-top: 16px; }
.over { margin-top: 3px; padding-left: 33px; }
.ov { width: 25px; margin-left: 1px; height: 11px; color: #555; }
.vv { margin-left: 5px; }
.roic { width: 14px; height: 14px; margin-left: 5px; flex: none; }
.edge { position: absolute; right: -1px; top: 0; bottom: 0; width: 2px; background: repeating-linear-gradient(to bottom, #333 0 1.500px, #ccc 1.500px 3px); }
.grip { position: absolute; right: -3px; bottom: -7px; width: 6px; height: 6px; background: #222; clip-path: polygon(0 0, 100% 0, 100% 60%, 40% 100%, 0 100%); }
```
